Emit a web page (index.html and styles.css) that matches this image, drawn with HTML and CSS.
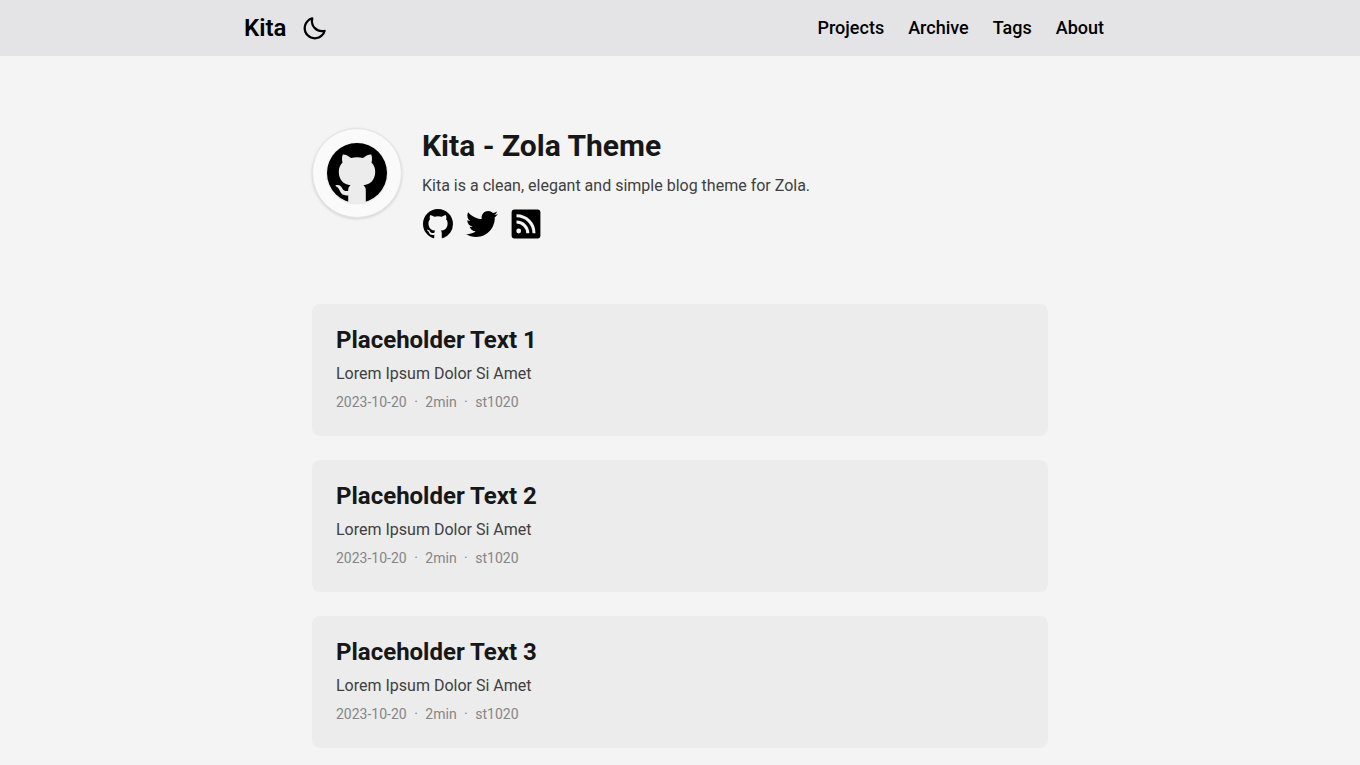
FILE: index.html
```html
<!DOCTYPE html>
<html lang="en">
<head>
<meta charset="utf-8">
<meta name="viewport" content="width=device-width, initial-scale=1">
<title>Kita - Zola Theme</title>
<link rel="stylesheet" href="styles.css">
</head>
<body>
<header class="site-header">
  <div class="header-inner">
    <div class="brand">
      <a class="brand-name" href="#">Kita</a>
      <button class="theme-toggle" type="button" aria-label="Toggle dark mode">
        <svg viewBox="0 0 24 24" width="27" height="27"><path d="M20.742 13.045a8.088 8.088 0 0 1-2.077.271c-2.135 0-4.14-.83-5.646-2.336a8.025 8.025 0 0 1-2.064-7.723A1 1 0 0 0 9.73 2.034a10.014 10.014 0 0 0-4.489 2.582c-3.898 3.898-3.898 10.243 0 14.143a9.937 9.937 0 0 0 7.072 2.93 9.93 9.93 0 0 0 7.07-2.929 10.007 10.007 0 0 0 2.583-4.491 1.001 1.001 0 0 0-1.224-1.224zm-2.772 4.301a7.947 7.947 0 0 1-5.656 2.343 7.953 7.953 0 0 1-5.658-2.344c-3.118-3.119-3.118-8.195 0-11.314a7.923 7.923 0 0 1 2.06-1.483 10.027 10.027 0 0 0 2.89 7.848 9.972 9.972 0 0 0 7.848 2.891 8.036 8.036 0 0 1-1.484 2.059z"/></svg>
      </button>
    </div>
    <nav class="site-nav">
      <a href="#">Projects</a>
      <a href="#">Archive</a>
      <a href="#">Tags</a>
      <a href="#">About</a>
    </nav>
  </div>
</header>
<main class="content">
  <section class="profile">
    <div class="avatar"><svg class="avatar-mark" viewBox="0 0 60 60" width="60" height="60" role="img" aria-label="Avatar"><circle class="cat" cx="30" cy="30.500" r="31"/><circle cx="30" cy="30" r="30"/><path class="cat" d="M21.200 60.900V47C21.200 45 22 43.500 23.600 42.300C17 41.500 11.800 37.500 11.800 28.500C11.800 25 13 22 15.500 19.400C14.700 17 14.800 14 15.800 11.600C18 11.400 20.700 12.600 24 15C28 14 32 14 36 15C39.300 12.600 42 11.400 44.200 11.600C45.200 14 45.300 17 44.500 19.400C47 22 48.200 25 48.200 28.500C48.200 37.500 43 41.500 36.400 42.300C38 43.500 38.800 45 38.800 47V60.900Z"/><path class="cat" d="M8.700 42.200C13 41.400 14.400 43.800 15.600 46C17 48.200 19 48.600 22 47.600V52.200C16.500 53 14.300 51.300 12.800 47.800C12 45.800 11 44.400 9.200 43.400C8.400 42.900 8.200 42.400 8.700 42.200Z"/></svg></div>
    <div class="profile-text">
      <h1 class="profile-title">Kita - Zola Theme</h1>
      <p class="profile-bio">Kita is a clean, elegant and simple blog theme for Zola.</p>
      <div class="social">
        <a href="#" aria-label="GitHub"><svg viewBox="0 0 16 16" width="30" height="30"><path d="M8 0C3.58 0 0 3.58 0 8c0 3.54 2.29 6.53 5.47 7.59.4.07.55-.17.55-.38 0-.19-.01-.82-.01-1.49-2.01.37-2.53-.49-2.69-.94-.09-.23-.48-.94-.82-1.13-.28-.15-.68-.52-.01-.53.63-.01 1.08.58 1.23.82.72 1.21 1.87.87 2.33.66.07-.52.28-.87.51-1.07-1.78-.2-3.64-.89-3.64-3.95 0-.87.31-1.59.82-2.15-.08-.2-.36-1.02.08-2.12 0 0 .67-.21 2.2.82.64-.18 1.32-.27 2-.27s1.36.09 2 .27c1.53-1.04 2.2-.82 2.2-.82.44 1.1.16 1.92.08 2.12.51.56.82 1.27.82 2.15 0 3.07-1.87 3.75-3.65 3.95.29.25.54.73.54 1.48 0 1.07-.01 1.93-.01 2.2 0 .21.15.46.55.38A8.01 8.01 0 0 0 16 8c0-4.42-3.58-8-8-8z"/></svg></a>
        <a href="#" aria-label="Twitter"><svg viewBox="0 0 512 512" width="32" height="32"><path d="M459.37 151.716c.325 4.548.325 9.097.325 13.645 0 138.72-105.583 298.558-298.558 298.558-59.452 0-114.68-17.219-161.137-47.106 8.447.974 16.568 1.299 25.34 1.299 49.055 0 94.213-16.568 130.274-44.832-46.132-.975-84.792-31.188-98.112-72.772 6.498.974 12.995 1.624 19.818 1.624 9.421 0 18.843-1.3 27.614-3.573-48.081-9.747-84.143-51.98-84.143-102.985v-1.299c13.969 7.797 30.214 12.67 47.431 13.319-28.264-18.843-46.781-51.005-46.781-87.391 0-19.492 5.197-37.36 14.294-52.954 51.655 63.675 129.3 105.258 216.365 109.807-1.624-7.797-2.599-15.918-2.599-24.04 0-57.828 46.782-104.934 104.934-104.934 30.213 0 57.502 12.67 76.67 33.137 23.715-4.548 46.456-13.32 66.599-25.34-7.798 24.366-24.366 44.833-46.132 57.827 21.117-2.273 41.584-8.122 60.426-16.243-14.292 20.791-32.161 39.308-52.628 54.253z"/></svg></a>
        <a href="#" aria-label="RSS"><svg viewBox="0 0 32 32" width="32" height="32"><rect x="1.600" y="1.600" width="28.800" height="28.800" rx="3"/><g class="rss-waves"><path d="M6.500 7.800c9.800 0 17.500 7.700 17.500 17.500"/><path d="M6.500 14c6.200 0 11.300 5.100 11.300 11.300"/></g><circle class="rss-dot" cx="8.700" cy="23" r="2.400"/></svg></a>
      </div>
    </div>
  </section>
  <section class="posts">
    <article class="post">
      <h2 class="post-title"><a href="#">Placeholder Text 1</a></h2>
      <p class="post-summary">Lorem Ipsum Dolor Si Amet</p>
      <p class="post-meta"><time datetime="2023-10-20">2023-10-20</time> <span class="dot">·</span> <span>2min</span> <span class="dot">·</span> <span>st1020</span></p>
    </article>
    <article class="post">
      <h2 class="post-title"><a href="#">Placeholder Text 2</a></h2>
      <p class="post-summary">Lorem Ipsum Dolor Si Amet</p>
      <p class="post-meta"><time datetime="2023-10-20">2023-10-20</time> <span class="dot">·</span> <span>2min</span> <span class="dot">·</span> <span>st1020</span></p>
    </article>
    <article class="post">
      <h2 class="post-title"><a href="#">Placeholder Text 3</a></h2>
      <p class="post-summary">Lorem Ipsum Dolor Si Amet</p>
      <p class="post-meta"><time datetime="2023-10-20">2023-10-20</time> <span class="dot">·</span> <span>2min</span> <span class="dot">·</span> <span>st1020</span></p>
    </article>
  </section>
</main>
</body>
</html>
```
FILE: styles.css
```css
* {
  box-sizing: border-box;
}

body {
  margin: 0;
  background: #f4f4f4;
  color: #171717;
  font-family: Roboto, sans-serif;
  font-size: 16px;
  line-height: 24px;
}

h1,
h2,
p {
  margin: 0;
}

a {
  color: inherit;
  text-decoration: none;
}

svg {
  display: block;
}

.site-header {
  background: #e4e4e6;
  color: #000;
}

.header-inner {
  display: flex;
  align-items: center;
  justify-content: space-between;
  max-width: 896px;
  min-height: 56px;
  margin: 0 auto;
  padding: 0 24px 0 12px;
}

.brand {
  display: flex;
  align-items: center;
  gap: 15px;
}

.brand-name {
  font-size: 24px;
  font-weight: 600;
  line-height: 32px;
}

.theme-toggle {
  padding: 0;
  border: 0;
  background: none;
  color: inherit;
  cursor: pointer;
}

.site-nav {
  display: flex;
  gap: 24px;
  font-size: 18px;
  font-weight: 500;
  line-height: 28px;
}

.content {
  max-width: 784px;
  margin: 0 auto;
  padding: 72px 24px 16px;
}

.profile {
  display: flex;
  align-items: flex-start;
  gap: 20px;
  margin-bottom: 64px;
}

.avatar {
  padding: 14px;
  border: 1px solid #e4e4e6;
  border-radius: 50%;
  background: #fafafa;
  box-shadow: 0 1px 3px rgba(0, 0, 0, 0.15);
}

.avatar-mark {
  overflow: visible;
}

.cat {
  fill: #ececec;
}

.profile-title {
  margin-bottom: 10px;
  font-size: 30px;
  font-weight: 700;
  line-height: 36px;
}

.profile-bio {
  margin-bottom: 10px;
  color: #404040;
}

.social {
  display: flex;
  gap: 12px;
  color: #000;
}

.social a {
  display: grid;
  place-items: center;
  width: 32px;
  height: 32px;
}

.rss-waves {
  fill: none;
  stroke: #f4f4f4;
  stroke-width: 3;
}

.rss-dot {
  fill: #f4f4f4;
}

.posts {
  display: grid;
  gap: 24px;
}

.post {
  padding: 20px 24px 23px;
  border-radius: 8px;
  background: #ececec;
}

.post-title {
  margin-bottom: 6px;
  font-size: 24px;
  font-weight: 700;
  line-height: 32px;
}

.post-summary {
  margin-bottom: 6px;
  color: #404040;
}

.post-meta {
  color: #868686;
  font-size: 14px;
  line-height: 21px;
}

.dot {
  margin: 0 4px;
}
```
